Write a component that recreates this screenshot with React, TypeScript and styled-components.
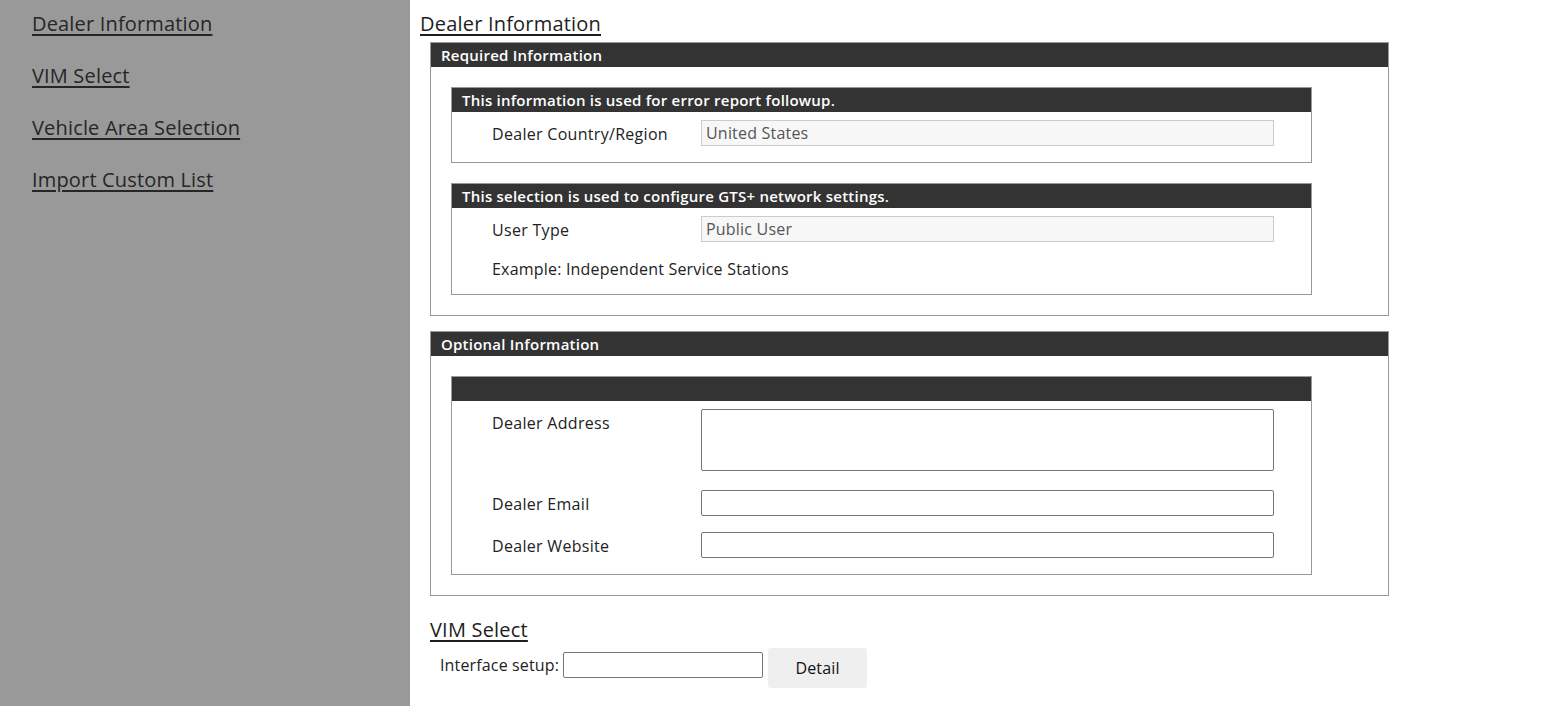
import React from "react";
import styled, { createGlobalStyle } from "styled-components";

const GlobalStyle = createGlobalStyle`
  html, body {
    margin: 0;
    padding: 0;
    background: #ffffff;
    font-family: "Open Sans", "Noto Sans", "Liberation Sans", sans-serif;
    color: #222222;
  }
  * {
    box-sizing: border-box;
  }
`;

const PageStyle = styled.div`
  display: flex;
  min-height: 100vh;
`;

const SideNavStyle = styled.nav`
  width: 410px;
  flex-shrink: 0;
  background: #999999;
  display: flex;
  flex-direction: column;
  gap: 28px;
  padding: 12px 0 0 32px;
`;

const SideLinkStyle = styled.a`
  font-size: 20px;
  line-height: 24px;
  letter-spacing: 0.17px;
  color: #262626;
  text-decoration: underline;
  text-underline-offset: 3px;
  cursor: pointer;
`;

const MainStyle = styled.main`
  flex: 1;
  padding: 12px 0 20px 10px;
`;

const SectionTitleStyle = styled.h2<{ $indent?: number; $top?: number }>`
  margin: ${(p) => p.$top ?? 0}px 0 0 ${(p) => p.$indent ?? 0}px;
  font-size: 20px;
  line-height: 24px;
  font-weight: 400;
  letter-spacing: 0.2px;
  color: #1e1e1e;
  text-decoration: underline;
  text-underline-offset: 3px;
`;

const OuterBoxStyle = styled.section<{ $top: number }>`
  width: 959px;
  margin: ${(p) => p.$top}px 0 0 10px;
  border: 1px solid #999999;
  padding-bottom: 20px;
`;

const BarStyle = styled.div`
  background: #333333;
  color: #ffffff;
  font-size: 15px;
  font-weight: 600;
  letter-spacing: 0.23px;
  height: 24px;
  line-height: 24px;
  padding-left: 10px;
  white-space: nowrap;
`;

const InnerBoxStyle = styled.div<{ $top: number }>`
  width: 90%;
  margin: ${(p) => p.$top}px 0 0 20px;
  border: 1px solid #999999;
`;

const FieldListStyle = styled.div<{ $bottom: number }>`
  display: flex;
  flex-direction: column;
  padding: 0 0 ${(p) => p.$bottom}px 40px;
`;

const RowStyle = styled.div<{ $top: number }>`
  display: flex;
  align-items: flex-start;
  margin-top: ${(p) => p.$top}px;
`;

const LabelStyle = styled.label`
  width: 209px;
  height: 26px;
  flex-shrink: 0;
  font-size: 16px;
  line-height: 26px;
  letter-spacing: 0.3px;
  padding-top: 1px;
  color: #222222;
`;

const NoteStyle = styled.div`
  font-size: 16px;
  line-height: 26px;
  letter-spacing: 0.2px;
  color: #222222;
`;

const ReadOnlyFieldStyle = styled.input`
  width: 573px;
  height: 26px;
  padding: 0 4px;
  border: 1px solid #cccccc;
  background: #f7f7f7;
  color: #555555;
  font-family: inherit;
  font-size: 16px;
  letter-spacing: 0.2px;
  outline: none;
`;

const TextFieldStyle = styled.input`
  width: 573px;
  height: 26px;
  padding: 0 4px;
  border: 1px solid #767676;
  border-radius: 2px;
  background: #ffffff;
  font-family: inherit;
  font-size: 16px;
`;

const TextAreaStyle = styled.textarea`
  width: 573px;
  height: 62px;
  padding: 2px 4px;
  border: 1px solid #767676;
  border-radius: 2px;
  background: #ffffff;
  font-family: inherit;
  font-size: 16px;
  resize: none;
  display: block;
`;

const SetupRowStyle = styled.div`
  display: flex;
  align-items: flex-start;
  margin: 6px 0 0 20px;
`;

const SetupLabelStyle = styled.label`
  font-size: 16px;
  line-height: 26px;
  letter-spacing: 0.15px;
  margin-top: 4px;
  margin-right: 4px;
  color: #222222;
`;

const SetupInputStyle = styled.input`
  width: 200px;
  height: 26px;
  margin-top: 4px;
  border: 1px solid #767676;
  border-radius: 2px;
  padding: 0 4px;
  font-family: inherit;
  font-size: 16px;
`;

const DetailButtonStyle = styled.button`
  width: 99px;
  height: 40px;
  margin-left: 5px;
  border: none;
  border-radius: 3px;
  background: #efefef;
  color: #111111;
  font-family: inherit;
  font-size: 16px;
  letter-spacing: 0.2px;
  cursor: pointer;
`;

const navLinks = [
  "Dealer Information",
  "VIM Select",
  "Vehicle Area Selection",
  "Import Custom List",
];

const App: React.FunctionComponent = () => {
  return (
    <PageStyle>
      <GlobalStyle />
      <SideNavStyle>
        {navLinks.map((link) => (
          <SideLinkStyle key={link}>{link}</SideLinkStyle>
        ))}
      </SideNavStyle>

      <MainStyle>
        <SectionTitleStyle>Dealer Information</SectionTitleStyle>

        <OuterBoxStyle $top={6}>
          <BarStyle>Required Information</BarStyle>

          <InnerBoxStyle $top={20}>
            <BarStyle>This information is used for error report followup.</BarStyle>
            <FieldListStyle $bottom={16}>
              <RowStyle $top={8}>
                <LabelStyle>Dealer Country/Region</LabelStyle>
                <ReadOnlyFieldStyle readOnly value="United States" />
              </RowStyle>
            </FieldListStyle>
          </InnerBoxStyle>

          <InnerBoxStyle $top={20}>
            <BarStyle>This selection is used to configure GTS+ network settings.</BarStyle>
            <FieldListStyle $bottom={12}>
              <RowStyle $top={8}>
                <LabelStyle>User Type</LabelStyle>
                <ReadOnlyFieldStyle readOnly value="Public User" />
              </RowStyle>
              <RowStyle $top={14}>
                <NoteStyle>Example: Independent Service Stations</NoteStyle>
              </RowStyle>
            </FieldListStyle>
          </InnerBoxStyle>
        </OuterBoxStyle>

        <OuterBoxStyle $top={15}>
          <BarStyle>Optional Information</BarStyle>

          <InnerBoxStyle $top={20}>
            <BarStyle />
            <FieldListStyle $bottom={16}>
              <RowStyle $top={8}>
                <LabelStyle>Dealer Address</LabelStyle>
                <TextAreaStyle />
              </RowStyle>
              <RowStyle $top={19}>
                <LabelStyle>Dealer Email</LabelStyle>
                <TextFieldStyle type="text" />
              </RowStyle>
              <RowStyle $top={16}>
                <LabelStyle>Dealer Website</LabelStyle>
                <TextFieldStyle type="text" />
              </RowStyle>
            </FieldListStyle>
          </InnerBoxStyle>
        </OuterBoxStyle>

        <SectionTitleStyle $indent={10} $top={22}>
          VIM Select
        </SectionTitleStyle>
        <SetupRowStyle>
          <SetupLabelStyle>Interface setup:</SetupLabelStyle>
          <SetupInputStyle type="text" />
          <DetailButtonStyle>Detail</DetailButtonStyle>
        </SetupRowStyle>
      </MainStyle>
    </PageStyle>
  );
};

export default App;
